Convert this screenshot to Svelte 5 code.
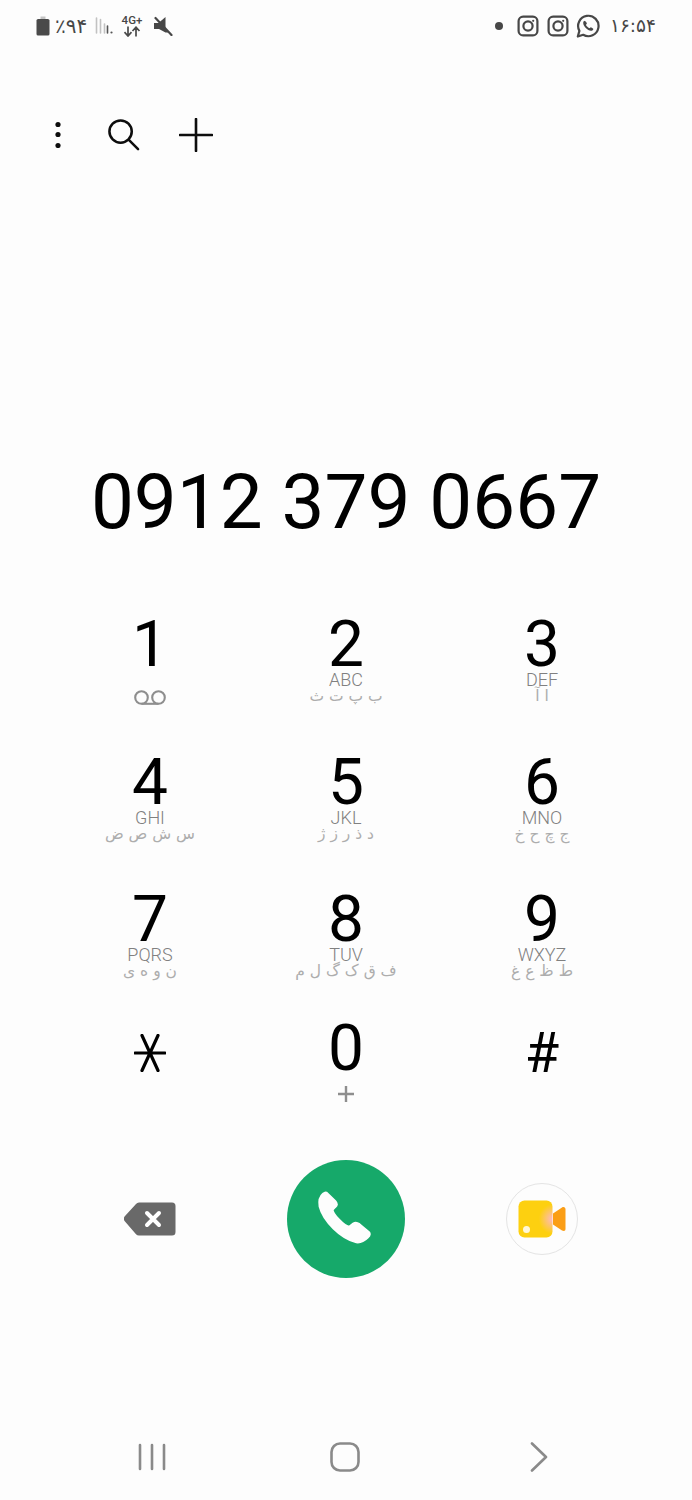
<script lang="ts">
  // Phone dialer keypad: status bar, toolbar, entered number, keys, call row, nav bar.
  const keys = [
    { digit: '1', voicemail: true },
    { digit: '2', latin: 'ABC', fa: 'ب پ ت ث' },
    { digit: '3', latin: 'DEF', fa: 'ا آ' },
    { digit: '4', latin: 'GHI', fa: 'س ش ص ض' },
    { digit: '5', latin: 'JKL', fa: 'د ذ ر ز ژ' },
    { digit: '6', latin: 'MNO', fa: 'ج چ ح خ' },
    { digit: '7', latin: 'PQRS', fa: 'ن و ه ی' },
    { digit: '8', latin: 'TUV', fa: 'ف ق ک گ ل م' },
    { digit: '9', latin: 'WXYZ', fa: 'ط ظ ع غ' },
  ];
</script>

{#snippet instagram()}
  <svg class="ig" viewBox="0 0 22 22" fill="none" stroke="#474747" stroke-width="2.2" aria-hidden="true">
    <rect x="1.6" y="1.6" width="18.8" height="18.8" rx="4.5" />
    <circle cx="11" cy="11" r="4.6" />
    <circle cx="16.2" cy="5.8" r="1.1" fill="#474747" stroke="none" />
  </svg>
{/snippet}

<div class="screen">
  <header class="status">
    <div class="status-left">
      <svg class="battery" viewBox="0 0 14 20" aria-hidden="true">
        <path d="M4.5 0.5h5v2.5h-5z" fill="#c4c4c4" />
        <rect x="0.5" y="3" width="13" height="16.5" rx="1.6" fill="#4a4a4a" />
      </svg>
      <span class="fa-status pct">٪۹۴</span>
      <svg class="signal" viewBox="0 0 18 18" aria-hidden="true">
        <g stroke-width="1.6" stroke-linecap="round">
          <path d="M1.5 1v15M5.500 2.500V16" stroke="#c2c2c2" />
          <path d="M9.500 7v9" stroke="#c2c2c2" />
          <path d="M12.500 9v7" stroke="#555" />
        </g>
        <circle cx="16.500" cy="15.500" r="1.100" fill="#555" />
      </svg>
      <div class="net">
        <span>4G+</span>
        <svg viewBox="0 0 20 11" aria-hidden="true" fill="none" stroke="#4a4a4a" stroke-width="1.7">
          <path d="M6 0.5v9M2.5 6.2 6 10l3.5-3.8M14 10.5v-9M10.5 5 14 1.2 17.500 5" />
        </svg>
      </div>
      <svg class="mute" viewBox="0 0 20 20" aria-hidden="true">
        <path d="M1 7h4.500L12.500 1v15z" fill="#474747" />
        <path d="M1 7h5l9.500 9.500h-3L6 13H1z" fill="#474747" />
        <path d="M2.500 2 18.500 19" stroke="#474747" stroke-width="2.200" stroke-linecap="round" />
      </svg>
    </div>
    <div class="status-right">
      <span class="dot"></span>
      {@render instagram()}
      {@render instagram()}
      <svg class="wa" viewBox="0 0 24 24" aria-hidden="true">
        <path d="M1.800 22.500 3.400 16.900A10.200 10.200 0 1 1 7.200 20.800z" fill="none" stroke="#474747" stroke-width="2.200" stroke-linejoin="round" />
        <path d="M8.700 6.700c-.6 0-1.500.9-1.500 2.300 0 3.100 4.300 7.700 7.800 7.700 1.300 0 2.300-.9 2.300-1.800 0-.5-2.100-1.700-2.500-1.700-.4 0-.9 1-1.300 1-1 0-3.500-2.400-3.500-3.400 0-.4.9-.9.900-1.300 0-.4-1-2.800-2.700-2.800z" fill="#474747" />
      </svg>
      <span class="fa-status time">۱۶:۵۴</span>
    </div>
  </header>

  <nav class="toolbar">
    <svg class="more" viewBox="0 0 6 26" aria-hidden="true">
      <circle cx="3" cy="3" r="2.600" /><circle cx="3" cy="13" r="2.600" /><circle cx="3" cy="24" r="2.600" />
    </svg>
    <svg class="search" viewBox="0 0 34 34" fill="none" stroke="#0d0d0d" stroke-width="2.600" stroke-linecap="round" aria-hidden="true">
      <circle cx="14" cy="14" r="11.500" />
      <path d="M22.500 22.500 32 32" />
    </svg>
    <svg class="plus" viewBox="0 0 34 34" fill="none" stroke="#0d0d0d" stroke-width="2.600" stroke-linecap="round" aria-hidden="true">
      <path d="M17 1v32M1 17h32" />
    </svg>
  </nav>

  <div class="number">0912 379 0667</div>

  <div class="keypad">
    {#each keys as k}
      <div class="key">
        <span class="digit">{k.digit}</span>
        {#if k.voicemail}
          <svg class="vm" viewBox="0 0 32 15" fill="none" stroke="#8e8e8e" stroke-width="2.100" aria-hidden="true">
            <circle cx="7.500" cy="7.500" r="6.300" />
            <circle cx="24.500" cy="7.500" r="6.300" />
            <path d="M7.500 13.800h17" />
          </svg>
        {:else}
          <span class="latin">{k.latin}</span>
          <span class="fa" dir="rtl">{k.fa}</span>
        {/if}
      </div>
    {/each}
    <div class="key last">
      <svg class="star" viewBox="0 0 32 38" fill="none" stroke="#000" stroke-width="3.200" stroke-linecap="round" aria-hidden="true">
        <path d="M8 1.500 24 36.500M24 1.500 8 36.500M1 19h30" />
      </svg>
    </div>
    <div class="key last">
      <span class="digit">0</span>
      <svg class="zero-plus" viewBox="0 0 16 16" fill="none" stroke="#8e8e8e" stroke-width="2.400" aria-hidden="true">
        <path d="M8 0v16M0 8h16" />
      </svg>
    </div>
    <div class="key last">
      <span class="hash">#</span>
    </div>
  </div>

  <div class="actions">
    <div class="action">
      <svg class="backspace" viewBox="0 0 52 34" aria-hidden="true">
        <path d="M15 0.500h33a3.500 3.500 0 0 1 3.500 3.500v26a3.500 3.500 0 0 1-3.500 3.500H15a4 4 0 0 1-3-1.300L1 19.500a4 4 0 0 1 0-5.500L12 2a4 4 0 0 1 3-1.500z" fill="#696969" />
        <path d="M23 11 35 23M35 11 23 23" stroke="#fff" stroke-width="4" stroke-linecap="round" />
      </svg>
    </div>
    <div class="action">
      <div class="call">
        <svg viewBox="0 0 58 58" aria-hidden="true">
          <path d="M10 3.500 18.500 11.500C21 14 20.500 16 18.500 17.500L16 20C16 24 27 36 32 36.500L36 33.500C38 32 40 32.500 42 34L51 41.500C52.500 43 52 45 50 47C47 50 43 52 39 51.500C24 48 7 31 3.500 17C2.500 11 4 7 7 4.500 8 3.500 9 3 10 3.500Z" fill="#fdfdfd" stroke="#fdfdfd" stroke-width="2" stroke-linejoin="round" />
        </svg>
      </div>
    </div>
    <div class="action">
      <div class="video">
        <svg viewBox="0 0 48 38" aria-hidden="true">
          <defs>
            <radialGradient id="cam" cx="1" cy="0.5" r="0.4">
              <stop offset="0" stop-color="#fdb9c4" />
              <stop offset="1" stop-color="#fdd010" />
            </radialGradient>
          </defs>
          <rect x="0.500" y="0.500" width="34" height="37" rx="6" fill="url(#cam)" />
          <circle cx="8.500" cy="29.500" r="3.500" fill="#fff8d8" />
          <path d="M35 13.500 44 7.500C46 6.500 47.500 7.500 47.500 9.500V29C47.500 31 46 31.500 44 30.500L35 24.500Z" fill="#fb9e16" />
        </svg>
      </div>
    </div>
  </div>

  <footer class="navbar">
    <svg class="nav-recent" viewBox="0 0 28 28" fill="none" stroke="#8a8a8a" stroke-width="2.600" stroke-linecap="round" aria-hidden="true">
      <path d="M2 2v24M14 2v24M26 2v24" />
    </svg>
    <svg class="nav-home" viewBox="0 0 30 30" fill="none" stroke="#8a8a8a" stroke-width="2.600" aria-hidden="true">
      <rect x="1.500" y="1.500" width="27" height="27" rx="8.500" />
    </svg>
    <svg class="nav-back" viewBox="0 0 18 30" fill="none" stroke="#8a8a8a" stroke-width="2.600" stroke-linecap="round" stroke-linejoin="round" aria-hidden="true">
      <path d="M2 1.500 16 15 2 28.500" />
    </svg>
  </footer>
</div>

<style>
  :global(body) { background: #fdfdfd; }

  .screen {
    width: 692px;
    height: 1500px;
    overflow: hidden;
    display: flex;
    flex-direction: column;
    background: #fdfdfd;
    font-family: Roboto, "Liberation Sans", sans-serif;
    color: #000;
  }

  .status {
    height: 52px;
    box-sizing: border-box;
    padding: 0 36px 0 36px;
    display: flex;
    align-items: center;
    justify-content: space-between;
    color: #474747;
  }
  .status-left, .status-right { display: flex; align-items: center; }
  .fa-status { font-family: "DejaVu Sans", sans-serif; font-size: 20px; line-height: 20px; }
  .battery { width: 14px; height: 20px; }
  .pct { margin-left: 5px; width: 32px; letter-spacing: 1px; white-space: nowrap; }
  .signal { width: 18px; height: 18px; margin-left: 8px; }
  .net { margin-left: 8px; width: 22px; display: flex; flex-direction: column; align-items: center; }
  .net span { font-size: 11.500px; line-height: 11px; font-weight: 500; }
  .net svg { width: 20px; height: 11px; }
  .mute { width: 20px; height: 20px; margin-left: 10px; }

  .dot { width: 8px; height: 8px; border-radius: 50%; background: #474747; margin-right: 14px; }
  .ig { width: 22px; height: 22px; margin-right: 8px; }
  .wa { width: 24px; height: 24px; margin-left: -1px; }
  .time { margin-left: 10px; width: 46px; font-size: 18.500px; text-align: left; white-space: nowrap; }

  .toolbar {
    height: 33px;
    margin-top: 66px;
    padding-left: 55px;
    display: flex;
    align-items: center;
  }
  .more { width: 6px; height: 27px; fill: #0d0d0d; }
  .search { width: 33px; height: 33px; margin-left: 46px; }
  .plus { width: 34px; height: 34px; margin-left: 39px; }

  .number {
    margin-top: 316px;
    height: 70px;
    line-height: 70px;
    text-align: center;
    font-size: 76.400px;
  }

  .keypad {
    margin: 79px auto 0;
    width: 588px;
    display: grid;
    grid-template-columns: repeat(3, 196px);
    grid-auto-rows: 137.500px;
  }
  .key { display: flex; flex-direction: column; align-items: center; }
  .digit { font-size: 64px; line-height: 58px; height: 58px; }
  .latin { font-size: 18px; font-weight: 300; line-height: 12px; height: 15px; color: #808080; }
  .fa {
    font-family: "DejaVu Sans", sans-serif;
    font-size: 15.500px;
    line-height: 15px;
    height: 15px;
    color: #adadad;
    white-space: nowrap;
  }
  .vm { width: 32px; height: 15px; margin-top: 16px; }

  .key.last { margin-top: -9px; }
  .star { width: 32px; height: 38px; margin-top: 14px; }
  .zero-plus { width: 16px; height: 16px; margin-top: 8px; }
  .hash { font-size: 56px; line-height: 58px; height: 58px; margin-top: 4px; }

  .actions {
    margin: -6px auto 0;
    width: 588px;
    display: grid;
    grid-template-columns: repeat(3, 196px);
    height: 118px;
    align-items: center;
    justify-items: center;
  }
  .action { display: flex; align-items: center; justify-content: center; }
  .backspace { width: 52px; height: 34px; }
  .call {
    width: 118px;
    height: 118px;
    border-radius: 50%;
    background: #16a96a;
    display: flex;
    align-items: center;
    justify-content: center;
  }
  .call svg { width: 60px; height: 60px; }
  .video {
    width: 72px;
    height: 72px;
    box-sizing: border-box;
    border: 1px solid #e4e4e4;
    border-radius: 50%;
    display: flex;
    align-items: center;
    justify-content: center;
  }
  .video svg { width: 48px; height: 38px; }

  .navbar {
    margin-top: 164px;
    padding-left: 138px;
    display: flex;
    align-items: center;
    height: 30px;
  }
  .nav-recent { width: 28px; height: 28px; }
  .nav-home { width: 30px; height: 30px; margin-left: 164px; }
  .nav-back { width: 18px; height: 30px; margin-left: 170px; }
</style>
